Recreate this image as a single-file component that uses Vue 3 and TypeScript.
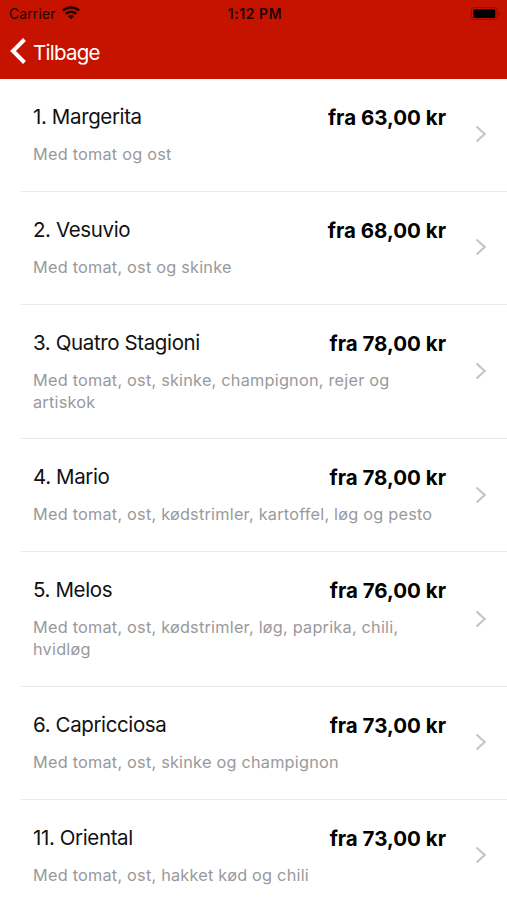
<script setup lang="ts">
interface Dish { name: string; price: string; lines: string[] }
const dishes: Dish[] = [
  { name: '1. Margerita', price: 'fra 63,00 kr', lines: ['Med tomat og ost'] },
  { name: '2. Vesuvio', price: 'fra 68,00 kr', lines: ['Med tomat, ost og skinke'] },
  { name: '3. Quatro Stagioni', price: 'fra 78,00 kr', lines: ['Med tomat, ost, skinke, champignon, rejer og', 'artiskok'] },
  { name: '4. Mario', price: 'fra 78,00 kr', lines: ['Med tomat, ost, kødstrimler, kartoffel, løg og pesto'] },
  { name: '5. Melos', price: 'fra 76,00 kr', lines: ['Med tomat, ost, kødstrimler, løg, paprika, chili,', 'hvidløg'] },
  { name: '6. Capricciosa', price: 'fra 73,00 kr', lines: ['Med tomat, ost, skinke og champignon'] },
  { name: '11. Oriental', price: 'fra 73,00 kr', lines: ['Med tomat, ost, hakket kød og chili'] },
]
</script>

<template>
  <main class="screen">
    <header class="header">
      <div class="status">
        <div class="carrier"><span>Carrier</span>
          <svg width="18" height="14" viewBox="0 0 18 14"><g fill="none" stroke="#230300" stroke-width="2.5"><path d="M.8 4.700a11.800 11.800 0 0 1 16.400 0M3.700 7.900a7.500 7.500 0 0 1 10.600 0"/></g><path d="M6 10.200a4.300 4.300 0 0 1 6 0L9 13.300z" fill="#230300"/></svg>
        </div>
        <span class="time">1:12 PM</span>
        <svg class="battery" width="30" height="13" viewBox="0 0 30 13"><rect x=".5" y=".5" width="25.500" height="12" rx="3" fill="none" stroke="#920d00"/><rect x="2.300" y="2.200" width="22" height="8.800" rx="1.500" fill="#000"/><path d="M27.800 4.500c1.800.7 1.800 3.300 0 4z" fill="#920d00"/></svg>
      </div>
      <div class="back">
        <svg width="17" height="28" viewBox="0 0 17 28"><path d="M14.500 2.500 3 14l11.500 11.500" fill="none" stroke="#fff" stroke-width="4"/></svg>
        <span>Tilbage</span>
      </div>
    </header>
    <section v-for="dish in dishes" :key="dish.name" class="dish" :class="{ tall: dish.lines.length > 1 }">
      <div class="copy">
        <div class="heading"><span class="name">{{ dish.name }}</span><strong>{{ dish.price }}</strong></div>
        <p><span v-for="line in dish.lines" :key="line">{{ line }}</span></p>
      </div>
      <svg class="chevron" width="12" height="18" viewBox="0 0 12 18"><path d="m1.500 1.500 8.200 7.500-8.200 7.500" fill="none" stroke="#c5c5c7" stroke-width="2.200"/></svg>
    </section>
  </main>
</template>

<style>
body { margin: 0; background: #fff; overflow: hidden; }
</style>
<style scoped>
.screen { width: 507px; height: 900px; overflow: hidden; background: #fff; font-family: Inter, "Liberation Sans", sans-serif; }
.header { height: 79px; background: #c61300; }
.status { height: 27px; display: grid; grid-template-columns: 1fr auto 1fr; align-items: center; padding: 0 6px 0 9px; font-size: 13.800px; color: #230300; }
.carrier { display: flex; align-items: center; gap: 6px; letter-spacing: .2px; }
.carrier svg { margin-top: -1px; }
.time { font-weight: 600; font-size: 14px; letter-spacing: .550px; }
.battery { justify-self: end; }
.back { display: flex; align-items: center; height: 48px; padding-left: 10px; gap: 6px; color: #fff; font-size: 20.500px; letter-spacing: -.750px; }
.back span { padding-top: 2px; }
.dish { box-sizing: border-box; height: 112.800px; margin-left: 21px; padding: 25px 20px 0 12px; border-bottom: 1px solid #e9e9eb; display: flex; }
.tall { height: 134.800px; }
.copy { width: 413px; flex: none; }
.heading { display: flex; justify-content: space-between; height: 26px; line-height: 25px; font-size: 20.500px; color: #111; }
.name { letter-spacing: -.380px; }
.heading strong { font-weight: 700; line-height: 27px; color: #000; }
p { margin: 13px 0 0; line-height: 22px; font-size: 16.300px; letter-spacing: .220px; color: #99999b; }
p span { display: block; white-space: nowrap; }
.chevron { margin-left: auto; align-self: center; margin-top: -26px; }
</style>
